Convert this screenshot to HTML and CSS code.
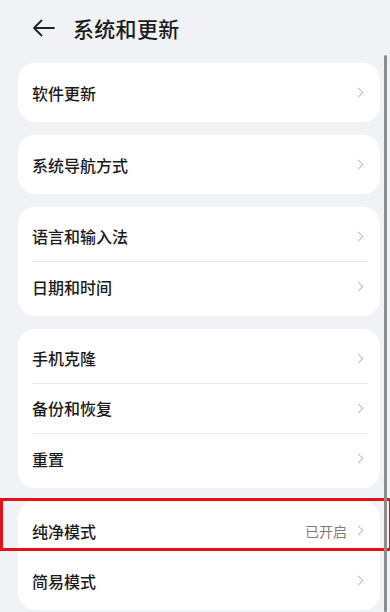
FILE: index.html
```html
<!DOCTYPE html>
<html lang="zh-CN">
<head>
    <meta charset="UTF-8">
    <meta name="viewport" content="width=device-width, initial-scale=1.0">
    <title>系统和更新</title>
    <link rel="stylesheet" href="styles.css">
</head>
<body>
    <div class="page">
        <!-- 顶部标题栏 -->
        <div class="header">
            <svg class="back" width="24" height="18" viewBox="0 0 24 18">
                <path d="M22 9H2M9.5 1.5L2 9l7.5 7.5" fill="none" stroke="#222" stroke-width="1.8" stroke-linecap="round" stroke-linejoin="round"/>
            </svg>
            <h1>系统和更新</h1>
        </div>

        <!-- 设置列表 -->
        <div class="list">
            <div class="card">
                <div class="row"><span class="label">软件更新</span><span class="arrow"></span></div>
            </div>
            <div class="card">
                <div class="row"><span class="label">系统导航方式</span><span class="arrow"></span></div>
            </div>
            <div class="card">
                <div class="row line"><span class="label">语言和输入法</span><span class="arrow"></span></div>
                <div class="row"><span class="label">日期和时间</span><span class="arrow"></span></div>
            </div>
            <div class="card">
                <div class="row line"><span class="label">手机克隆</span><span class="arrow"></span></div>
                <div class="row line"><span class="label">备份和恢复</span><span class="arrow"></span></div>
                <div class="row"><span class="label">重置</span><span class="arrow"></span></div>
            </div>
            <div class="card">
                <div class="row marked"><span class="label">纯净模式</span><span class="value">已开启</span><span class="arrow"></span></div>
                <div class="row"><span class="label">简易模式</span><span class="arrow"></span></div>
            </div>
        </div>

        <div class="scrollbar"></div>
    </div>
</body>
</html>
```

FILE: styles.css
```css
/* 全局 */
body, html {
    margin: 0;
    padding: 0;
    height: 100%;
    background-color: #f1f2f5;
    font-family: "Noto Sans CJK SC", "Noto Sans", sans-serif;
    color: #1b1b1b;
    overflow: hidden;
}

* {
    box-sizing: border-box;
}

.page {
    position: relative;
    height: 612px;
}

/* 标题栏 */
.header {
    display: flex;
    align-items: center;
    height: 56px;
    padding-left: 32px;
}

.header .back {
    margin-right: 17px;
}

.header h1 {
    margin: 0;
    font-size: 21px;
    font-weight: 500;
    letter-spacing: 0.3px;
}

/* 列表 */
.list {
    display: flex;
    flex-direction: column;
    gap: 13px;
    padding: 7px 10px 0 18px;
}

.card {
    background: #fff;
    border-radius: 17px;
    padding: 4.5px 12px 4.5px 14px;
}

.row {
    position: relative;
    display: flex;
    align-items: center;
    height: 50px;
}

.row.line {
    border-bottom: 1px solid #ebebeb;
}

.label {
    flex: 1;
    font-size: 16px;
    font-weight: 500;
}

.value {
    font-size: 14px;
    color: #7d7d7d;
    margin-right: 8px;
}

/* 右侧箭头 */
.arrow {
    width: 7px;
    height: 7px;
    border-top: 1.5px solid #bcbcbc;
    border-right: 1.5px solid #bcbcbc;
    transform: rotate(45deg);
    margin-right: 6px;
}

/* 红色标注框 */
.row.marked::after {
    content: "";
    position: absolute;
    left: -32px;
    right: -24px;
    top: -7.5px;
    bottom: 4.5px;
    border: 3px solid #e5101a;
}

/* 滚动条 */
.scrollbar {
    position: absolute;
    right: 3px;
    top: 55px;
    bottom: 0;
    width: 3px;
    background: #8c8c8c;
    border-radius: 2px;
}
```
